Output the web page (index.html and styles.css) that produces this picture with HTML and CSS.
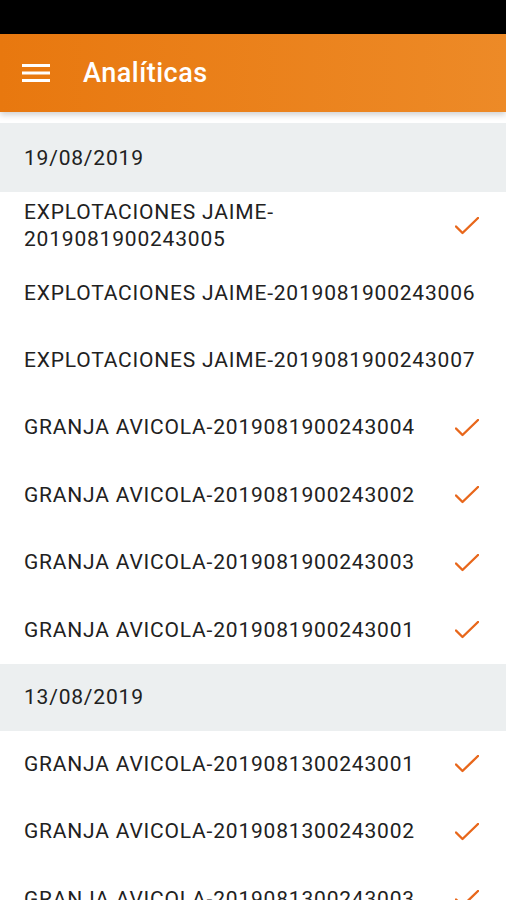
FILE: index.html
```html
<!DOCTYPE html>
<html lang="es">
<head>
  <meta charset="UTF-8" />
  <meta name="viewport" content="width=device-width, initial-scale=1" />
  <title>Analíticas</title>
  <link rel="stylesheet" href="styles.css">
</head>
<body>
  <div class="status-bar"></div>

  <!-- App bar -->
  <div class="app-bar">
    <span class="menu-icon">
      <svg width="28" height="20" viewBox="0 0 28 20">
        <rect x="0" y="1" width="28" height="3" fill="#fff"/>
        <rect x="0" y="8.5" width="28" height="3" fill="#fff"/>
        <rect x="0" y="16" width="28" height="3" fill="#fff"/>
      </svg>
    </span>
    <span class="app-title">Analíticas</span>
  </div>

  <!-- List -->
  <div class="list">
    <div class="section-header">19/08/2019</div>
    <div class="row">
      <span class="row-text">EXPLOTACIONES JAIME-<br>2019081900243005</span>
      <span class="check"><svg width="24" height="18" viewBox="0 0 24 18"><polyline points="1,9.5 7.5,16 23,1" /></svg></span>
    </div>
    <div class="row"><span class="row-text">EXPLOTACIONES JAIME-2019081900243006</span></div>
    <div class="row"><span class="row-text">EXPLOTACIONES JAIME-2019081900243007</span></div>
    <div class="row">
      <span class="row-text">GRANJA AVICOLA-2019081900243004</span>
      <span class="check"><svg width="24" height="18" viewBox="0 0 24 18"><polyline points="1,9.5 7.5,16 23,1" /></svg></span>
    </div>
    <div class="row">
      <span class="row-text">GRANJA AVICOLA-2019081900243002</span>
      <span class="check"><svg width="24" height="18" viewBox="0 0 24 18"><polyline points="1,9.5 7.5,16 23,1" /></svg></span>
    </div>
    <div class="row">
      <span class="row-text">GRANJA AVICOLA-2019081900243003</span>
      <span class="check"><svg width="24" height="18" viewBox="0 0 24 18"><polyline points="1,9.5 7.5,16 23,1" /></svg></span>
    </div>
    <div class="row">
      <span class="row-text">GRANJA AVICOLA-2019081900243001</span>
      <span class="check"><svg width="24" height="18" viewBox="0 0 24 18"><polyline points="1,9.5 7.5,16 23,1" /></svg></span>
    </div>

    <div class="section-header">13/08/2019</div>
    <div class="row">
      <span class="row-text">GRANJA AVICOLA-2019081300243001</span>
      <span class="check"><svg width="24" height="18" viewBox="0 0 24 18"><polyline points="1,9.5 7.5,16 23,1" /></svg></span>
    </div>
    <div class="row">
      <span class="row-text">GRANJA AVICOLA-2019081300243002</span>
      <span class="check"><svg width="24" height="18" viewBox="0 0 24 18"><polyline points="1,9.5 7.5,16 23,1" /></svg></span>
    </div>
    <div class="row">
      <span class="row-text">GRANJA AVICOLA-2019081300243003</span>
      <span class="check"><svg width="24" height="18" viewBox="0 0 24 18"><polyline points="1,9.5 7.5,16 23,1" /></svg></span>
    </div>
  </div>
</body>
</html>
```

FILE: styles.css
```css
/* — Base — */
* { box-sizing: border-box; margin: 0; padding: 0; }
html, body { height: 100%; }
body {
  font-family: Roboto, "Noto Sans", sans-serif;
  background: #fff;
  color: #212121;
  overflow: hidden;
}

/* — Status bar — */
.status-bar { height: 34px; background: #000; }

/* — App bar — */
.app-bar {
  position: relative; z-index: 2;
  height: 78px;
  display: flex; align-items: center;
  padding-left: 22px;
  background: linear-gradient(to right, #e8780f, #ed8a27);
  box-shadow: 0 3px 6px rgba(0,0,0,0.18);
}
.menu-icon { display: flex; width: 28px; height: 20px; }
.app-title {
  margin-left: 33px;
  color: #fff;
  font-size: 27px; font-weight: 500;
  letter-spacing: 0.5px;
}

/* — List — */
.list { padding-top: 11px; }
.section-header {
  height: 69px;
  display: flex; align-items: center;
  padding-left: 24px;
  background: #eceff0;
  font-size: 21px; letter-spacing: 0.8px;
}
.list .section-header:not(:first-child) { height: 67px; }

.row {
  min-height: 67.4px;
  display: flex; align-items: center; justify-content: space-between;
  padding: 6px 27px 6px 24px;
  font-size: 21px; line-height: 27px; letter-spacing: 0.8px;
}
.check { display: flex; width: 24px; height: 18px; flex-shrink: 0; }
.check polyline {
  fill: none;
  stroke: #e8671b; stroke-width: 2.4;
  stroke-linecap: round; stroke-linejoin: round;
}
```
